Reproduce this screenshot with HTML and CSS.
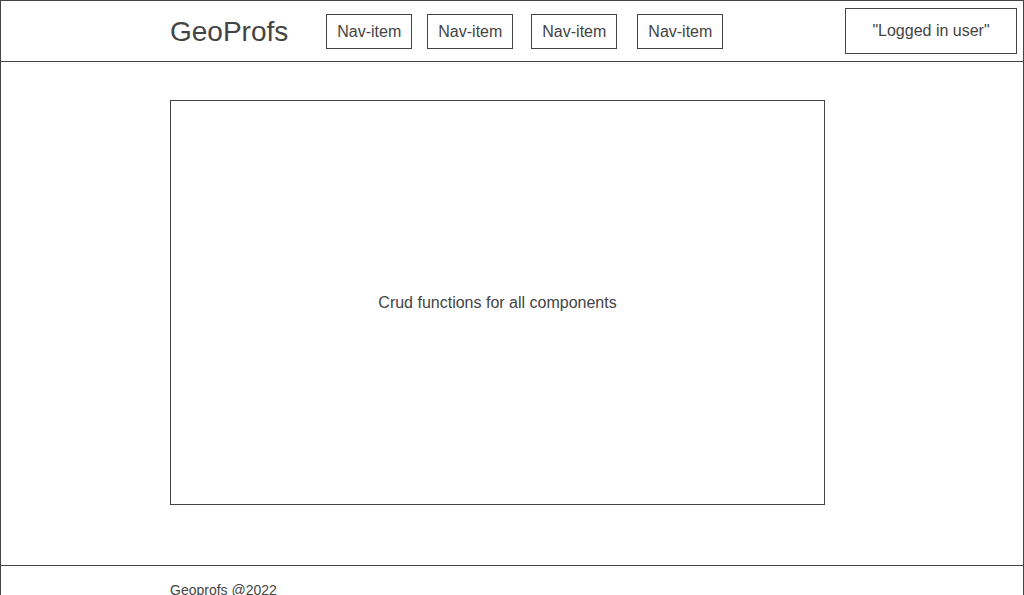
FILE: index.html
```html
<!DOCTYPE html>
<html lang="en">
<head>
<meta charset="utf-8">
<title>GeoProfs</title>
<link rel="stylesheet" href="styles.css">
</head>
<body>
<div class="page">
  <header class="header">
    <div class="logo">GeoProfs</div>
    <nav class="nav">
      <a class="nav-item nav-1">Nav-item</a>
      <a class="nav-item nav-2">Nav-item</a>
      <a class="nav-item nav-3">Nav-item</a>
      <a class="nav-item nav-4">Nav-item</a>
    </nav>
    <div class="user">"Logged in user"</div>
  </header>
  <main class="main">
    <div class="crud">Crud functions for all components</div>
  </main>
  <footer class="footer">Geoprofs @2022</footer>
</div>
</body>
</html>
```
FILE: styles.css
```css
html, body {
  margin: 0;
  padding: 0;
  background: #fff;
}
body {
  font-family: "Liberation Sans", Arial, sans-serif;
  color: #444;
}
.page {
  border: 1px solid #444;
  border-bottom: none;
  min-height: 700px;
}
.header {
  height: 60px;
  border-bottom: 1px solid #444;
  display: flex;
  align-items: center;
  padding-left: 169px;
}
.logo {
  font-size: 28px;
  line-height: 32px;
  margin-top: 1px;
}
.nav {
  display: flex;
  align-items: center;
  margin-left: 38px;
}
.nav-item {
  display: block;
  border: 1px solid #444;
  height: 33px;
  line-height: 33px;
  padding: 0 10px;
  font-size: 16px;
  box-sizing: content-box;
}
.nav-2 { margin-left: 15px; }
.nav-3 { margin-left: 18px; }
.nav-4 { margin-left: 20px; }
.user {
  margin-left: auto;
  margin-right: 6px;
  margin-top: -1px;
  width: 170px;
  height: 44px;
  line-height: 44px;
  border: 1px solid #444;
  text-align: center;
  font-size: 16px;
}
.main {
  padding: 38px 0 60px 169px;
}
.crud {
  width: 653px;
  height: 403px;
  border: 1px solid #444;
  display: flex;
  align-items: center;
  justify-content: center;
  font-size: 16px;
}
.footer {
  border-top: 1px solid #444;
  padding: 16px 0 0 169px;
  font-size: 14px;
  line-height: 16px;
}
```
